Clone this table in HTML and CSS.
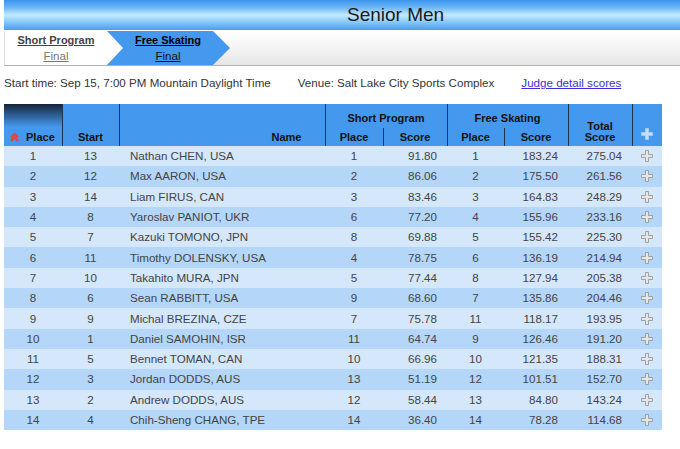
FILE: index.html
```html
<!DOCTYPE html>
<html>
<head>
<meta charset="utf-8">
<link rel="stylesheet" href="styles.css">
</head>
<body>
<svg class="defs" width="0" height="0">
  <defs>
    <path id="plus" d="M4.5 0.5h3v4h4v3h-4v4h-3v-4h-4v-3h4z"/>
  </defs>
</svg>
<div class="titlebar"><h1 class="title">Senior Men</h1></div>
<div class="tabbar">
  <div class="tab tab-first">
    <a class="tab-main" href="#">Short Program</a>
    <a class="tab-sub" href="#">Final</a>
  </div>
  <div class="tab tab-active">
    <a class="tab-main" href="#">Free Skating</a>
    <a class="tab-sub" href="#">Final</a>
  </div>
</div>
<div class="info">
  <span>Start time: Sep 15, 7:00 PM Mountain Daylight Time</span>
  <span>Venue: Salt Lake City Sports Complex</span>
  <a href="#" class="judge">Judge detail scores</a>
</div>
<table class="results">
  <colgroup>
    <col class="c-place"><col class="c-start"><col class="c-name"><col class="c-sp1"><col class="c-sp2"><col class="c-fs1"><col class="c-fs2"><col class="c-tot"><col class="c-plus">
  </colgroup>
  <thead>
    <tr class="h1">
      <th rowspan="2" class="sorted"><span class="sort"><svg width="9" height="10" viewBox="0 0 9 10"><path d="M1 5.5L4.5 2L8 5.5M1 9L4.5 5.5L8 9" fill="none" stroke="#e8403a" stroke-width="2"/></svg></span>Place</th>
      <th rowspan="2" class="sep">Start</th>
      <th rowspan="2" class="sep name-h">Name</th>
      <th colspan="2" class="sep grp">Short Program</th>
      <th colspan="2" class="sep grp">Free Skating</th>
      <th rowspan="2" class="sep">Total<br>Score</th>
      <th rowspan="2" class="sep hplus"><svg width="12" height="12" viewBox="0 0 12 12"><use href="#plus" fill="#c9def6" stroke="#b9d3f2" stroke-width="0.6"/></svg></th>
    </tr>
    <tr class="h2">
      <th class="sep">Place</th>
      <th class="sep">Score</th>
      <th class="sep">Place</th>
      <th class="sep">Score</th>
    </tr>
  </thead>
  <tbody>
    <tr><td>1</td><td>13</td><td class="nm">Nathan CHEN, USA</td><td>1</td><td class="num">91.80</td><td>1</td><td class="num">183.24</td><td class="num">275.04</td><td class="pl"><svg width="12" height="12" viewBox="0 0 12 12"><use href="#plus"/></svg></td></tr>
    <tr><td>2</td><td>12</td><td class="nm">Max AARON, USA</td><td>2</td><td class="num">86.06</td><td>2</td><td class="num">175.50</td><td class="num">261.56</td><td class="pl"><svg width="12" height="12" viewBox="0 0 12 12"><use href="#plus"/></svg></td></tr>
    <tr><td>3</td><td>14</td><td class="nm">Liam FIRUS, CAN</td><td>3</td><td class="num">83.46</td><td>3</td><td class="num">164.83</td><td class="num">248.29</td><td class="pl"><svg width="12" height="12" viewBox="0 0 12 12"><use href="#plus"/></svg></td></tr>
    <tr><td>4</td><td>8</td><td class="nm">Yaroslav PANIOT, UKR</td><td>6</td><td class="num">77.20</td><td>4</td><td class="num">155.96</td><td class="num">233.16</td><td class="pl"><svg width="12" height="12" viewBox="0 0 12 12"><use href="#plus"/></svg></td></tr>
    <tr><td>5</td><td>7</td><td class="nm">Kazuki TOMONO, JPN</td><td>8</td><td class="num">69.88</td><td>5</td><td class="num">155.42</td><td class="num">225.30</td><td class="pl"><svg width="12" height="12" viewBox="0 0 12 12"><use href="#plus"/></svg></td></tr>
    <tr><td>6</td><td>11</td><td class="nm">Timothy DOLENSKY, USA</td><td>4</td><td class="num">78.75</td><td>6</td><td class="num">136.19</td><td class="num">214.94</td><td class="pl"><svg width="12" height="12" viewBox="0 0 12 12"><use href="#plus"/></svg></td></tr>
    <tr><td>7</td><td>10</td><td class="nm">Takahito MURA, JPN</td><td>5</td><td class="num">77.44</td><td>8</td><td class="num">127.94</td><td class="num">205.38</td><td class="pl"><svg width="12" height="12" viewBox="0 0 12 12"><use href="#plus"/></svg></td></tr>
    <tr><td>8</td><td>6</td><td class="nm">Sean RABBITT, USA</td><td>9</td><td class="num">68.60</td><td>7</td><td class="num">135.86</td><td class="num">204.46</td><td class="pl"><svg width="12" height="12" viewBox="0 0 12 12"><use href="#plus"/></svg></td></tr>
    <tr><td>9</td><td>9</td><td class="nm">Michal BREZINA, CZE</td><td>7</td><td class="num">75.78</td><td>11</td><td class="num">118.17</td><td class="num">193.95</td><td class="pl"><svg width="12" height="12" viewBox="0 0 12 12"><use href="#plus"/></svg></td></tr>
    <tr><td>10</td><td>1</td><td class="nm">Daniel SAMOHIN, ISR</td><td>11</td><td class="num">64.74</td><td>9</td><td class="num">126.46</td><td class="num">191.20</td><td class="pl"><svg width="12" height="12" viewBox="0 0 12 12"><use href="#plus"/></svg></td></tr>
    <tr><td>11</td><td>5</td><td class="nm">Bennet TOMAN, CAN</td><td>10</td><td class="num">66.96</td><td>10</td><td class="num">121.35</td><td class="num">188.31</td><td class="pl"><svg width="12" height="12" viewBox="0 0 12 12"><use href="#plus"/></svg></td></tr>
    <tr><td>12</td><td>3</td><td class="nm">Jordan DODDS, AUS</td><td>13</td><td class="num">51.19</td><td>12</td><td class="num">101.51</td><td class="num">152.70</td><td class="pl"><svg width="12" height="12" viewBox="0 0 12 12"><use href="#plus"/></svg></td></tr>
    <tr><td>13</td><td>2</td><td class="nm">Andrew DODDS, AUS</td><td>12</td><td class="num">58.44</td><td>13</td><td class="num">84.80</td><td class="num">143.24</td><td class="pl"><svg width="12" height="12" viewBox="0 0 12 12"><use href="#plus"/></svg></td></tr>
    <tr><td>14</td><td>4</td><td class="nm">Chih-Sheng CHANG, TPE</td><td>14</td><td class="num">36.40</td><td>14</td><td class="num">78.28</td><td class="num">114.68</td><td class="pl"><svg width="12" height="12" viewBox="0 0 12 12"><use href="#plus"/></svg></td></tr>
  </tbody>
</table>
</body>
</html>
```

FILE: styles.css
```css
html, body {
  margin: 0;
  padding: 0;
  background: #fff;
}
body {
  padding-left: 4px;
  font-family: "Liberation Sans", Arial, sans-serif;
  font-size: 11.6px;
  color: #333;
}
.defs {
  position: absolute;
  width: 0;
  height: 0;
}
.titlebar {
  height: 30px;
  background: linear-gradient(to bottom, #3b93ee 0%, #6cb6f6 25%, #c2eaff 50%, #84c6f8 75%, #4a9ef0 100%);
  display: flex;
  align-items: center;
}
.title {
  margin: 0 0 0 343px;
  font-size: 19px;
  font-weight: normal;
  color: #1a1a1a;
  line-height: 30px;
}
.tabbar {
  margin-top: 1px;
  height: 34px;
  background: linear-gradient(to bottom, #ffffff 0%, #f4f4f4 50%, #e6e6e6 100%);
  border-bottom: 1px solid #b0b0b0;
  border-left: 1px solid #e0e0e0;
  display: flex;
}
.tab {
  height: 34px;
  display: flex;
  flex-direction: column;
  align-items: center;
  justify-content: center;
  gap: 2px;
  box-sizing: border-box;
}
.tab-first {
  width: 118px;
  background: #fff;
  padding-right: 16px;
  clip-path: polygon(0 0, calc(100% - 16px) 0, 100% 50%, calc(100% - 16px) 100%, 0 100%);
}
.tab-active {
  width: 123px;
  margin-left: -16px;
  padding-left: 16px;
  padding-right: 17px;
  background: #4499ee;
  clip-path: polygon(0 0, calc(100% - 17px) 0, 100% 50%, calc(100% - 17px) 100%, 0 100%, 16px 50%);
}
.tab a {
  line-height: 13px;
}
.tab-main {
  font-weight: bold;
  font-size: 11px;
  color: #444;
}
.tab-sub {
  font-size: 11.6px;
  color: #777;
}
.tab-active .tab-main {
  color: #000;
}
.tab-active .tab-sub {
  color: #111;
}
.info {
  display: flex;
  gap: 27px;
  margin-top: 10px;
  line-height: 14px;
  color: #333;
}
.judge {
  color: #3b2fd8;
}
.results {
  margin-top: 14px;
  border-collapse: collapse;
  border-spacing: 0;
  table-layout: fixed;
  width: 658px;
}
.c-place { width: 58px; }
.c-start { width: 57px; }
.c-name { width: 206px; }
.c-sp1 { width: 58px; }
.c-sp2 { width: 64px; }
.c-fs1 { width: 57px; }
.c-fs2 { width: 64px; }
.c-tot { width: 64px; }
.c-plus { width: 30px; }
.results th {
  background: #4499ee;
  color: #111;
  font-weight: bold;
  font-size: 11px;
  padding: 0 0 2px 0;
  vertical-align: bottom;
  line-height: 11.6px;
  text-align: center;
}
.results th.sep {
  border-left: 1px solid #1b3552;
}
.results .h1 {
  height: 24px;
}
.results .h2 {
  height: 18px;
}
.results th.grp {
  padding-bottom: 3px;
}
.results th.sorted {
  background: linear-gradient(to bottom, #13243a 0%, #2d5a8e 25%, #4499ee 55%, #4499ee 100%);
  text-align: left;
  padding-left: 6px;
}
.sort {
  display: inline-block;
  width: 16px;
  vertical-align: -1px;
}
.sort svg {
  display: block;
}
.results th.name-h {
  text-align: right;
  padding-right: 23px;
}
.results th.hplus {
  padding-bottom: 6px;
}
.hplus svg {
  display: block;
  margin: 0 auto;
}
.results td {
  height: 20.3px;
  padding: 0;
  text-align: center;
  color: #444;
  font-size: 11.6px;
  line-height: 14px;
  vertical-align: middle;
}
.results tbody tr:nth-child(odd) td {
  background: #d4e7fb;
}
.results tbody tr:nth-child(even) td {
  background: #b3d6f9;
}
.results td.nm {
  text-align: left;
  padding-left: 11px;
}
.results td.num {
  text-align: right;
  padding-right: 10px;
}
.results td.pl svg {
  display: block;
  margin: 0 auto;
  fill: #e6e6e6;
  stroke: #999;
  stroke-width: 0.9;
}
```
